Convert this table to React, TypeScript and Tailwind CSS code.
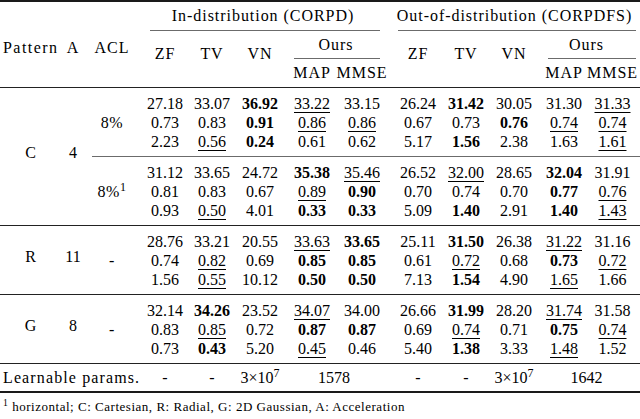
const fullCols =
  "grid grid-cols-[64px_18px_60px_46px_48px_48px_56px_44px_10px_48px_48px_48px_52px_45px_5px]";
const subCols =
  "grid grid-cols-[60px_46px_48px_48px_56px_44px_10px_48px_48px_48px_52px_45px_5px]";

type Block = { acl: React.ReactNode; rows: string[][] };

// "*x" bold, "_x" underlined
function Num({ v }: { v: string }) {
  const bold = v.startsWith("*");
  const under = v.startsWith("_");
  const text = v.replace(/^[*_]/, "");
  return (
    <div className="h-[19px] text-center whitespace-nowrap">
      <span
        className={
          bold
            ? "font-bold"
            : under
              ? "underline decoration-1 underline-offset-[3px]"
              : ""
        }
      >
        {text}
      </span>
    </div>
  );
}

function SubBlock({ block }: { block: Block }) {
  return (
    <div className={`${subCols} pt-[6px] pb-[5px]`}>
      <div className="row-span-3 col-start-1 flex items-center justify-center tracking-[0.04em]">
        {block.acl}
      </div>
      {block.rows.map((r, i) => (
        <>
          {r.slice(0, 5).map((v, j) => (
            <Num key={`a${i}${j}`} v={v} />
          ))}
          <div key={`s${i}`} />
          {r.slice(5).map((v, j) => (
            <Num key={`b${i}${j}`} v={v} />
          ))}
          <div key={`t${i}`} />
        </>
      ))}
    </div>
  );
}

function Group({ pattern, accel, blocks }: { pattern: string; accel: string; blocks: Block[] }) {
  return (
    <div className="flex">
      <div className="w-[64px] flex items-center justify-center pb-[8px] pr-[3px]">{pattern}</div>
      <div className="w-[18px] flex items-center justify-center pb-[8px]">{accel}</div>
      <div className="flex-1 flex flex-col">
        {blocks.map((b, i) => (
          <div key={i}>
            {i > 0 && <div className="ml-[10px] h-px bg-[#6b6b6b]" />}
            <SubBlock block={b} />
          </div>
        ))}
      </div>
    </div>
  );
}

function Header() {
  return (
    <div className={`${fullCols} grid-rows-[27px_3px_25px_3px_25px] pb-[2px] tracking-[0.06em]`}>
      <div className="col-start-1 row-start-1 row-span-5 flex items-center justify-start pt-[7px] pl-[3px] tracking-[0.09em] whitespace-nowrap">
        Pattern
      </div>
      <div className="col-start-2 row-start-1 row-span-5 flex items-center justify-center pt-[7px]">
        A
      </div>
      <div className="col-start-3 row-start-1 row-span-5 flex items-center justify-center pt-[7px]">
        ACL
      </div>

      <div className="col-start-4 col-span-5 row-start-1 flex items-center justify-center whitespace-nowrap">
        In-distribution (CORPD)
      </div>
      <div className="col-start-4 col-span-5 row-start-2 flex items-center">
        <div className="ml-[8px] mr-[4px] h-px w-full bg-[#6b6b6b]" />
      </div>
      <div className="col-start-10 col-span-5 row-start-1 flex items-center justify-center whitespace-nowrap">
        Out-of-distribution (CORPDFS)
      </div>
      <div className="col-start-10 col-span-6 row-start-2 flex items-center">
        <div className="ml-[4px] mr-[4px] h-px w-full bg-[#6b6b6b]" />
      </div>

      {["ZF", "TV", "VN"].map((t, i) => (
        <div
          key={`l${t}`}
          className={`${i === 0 ? "col-start-4" : i === 1 ? "col-start-5" : "col-start-6"} row-start-3 row-span-3 flex items-center justify-center pb-[11px]`}
        >
          {t}
        </div>
      ))}
      {["ZF", "TV", "VN"].map((t, i) => (
        <div
          key={`r${t}`}
          className={`${i === 0 ? "col-start-10" : i === 1 ? "col-start-11" : "col-start-12"} row-start-3 row-span-3 flex items-center justify-center pb-[11px]`}
        >
          {t}
        </div>
      ))}

      <div className="col-start-7 col-span-2 row-start-3 flex items-center justify-center pl-[4px]">
        Ours
      </div>
      <div className="col-start-7 col-span-2 row-start-4 flex items-center">
        <div className="ml-[10px] mr-[4px] h-px w-full bg-[#6b6b6b]" />
      </div>
      <div className="col-start-13 col-span-2 row-start-3 flex items-center justify-center">
        Ours
      </div>
      <div className="col-start-13 col-span-3 row-start-4 flex items-center">
        <div className="ml-[10px] mr-[4px] h-px w-full bg-[#6b6b6b]" />
      </div>

      <div className="col-start-7 row-start-5 flex items-center justify-center">MAP</div>
      <div className="col-start-8 row-start-5 flex items-center justify-center">MMSE</div>
      <div className="col-start-13 row-start-5 flex items-center justify-center">MAP</div>
      <div className="col-start-14 row-start-5 flex items-center justify-center">MMSE</div>
    </div>
  );
}

const groups: { pattern: string; accel: string; blocks: Block[] }[] = [
  {
    pattern: "C",
    accel: "4",
    blocks: [
      {
        acl: "8%",
        rows: [
          ["27.18", "33.07", "*36.92", "_33.22", "33.15", "26.24", "*31.42", "30.05", "31.30", "_31.33"],
          ["0.73", "0.83", "*0.91", "_0.86", "_0.86", "0.67", "0.73", "*0.76", "_0.74", "_0.74"],
          ["2.23", "_0.56", "*0.24", "0.61", "0.62", "5.17", "*1.56", "2.38", "1.63", "_1.61"],
        ],
      },
      {
        acl: (
          <span>
            8%<sup>1</sup>
          </span>
        ),
        rows: [
          ["31.12", "33.65", "24.72", "*35.38", "_35.46", "26.52", "_32.00", "28.65", "*32.04", "31.91"],
          ["0.81", "0.83", "0.67", "_0.89", "*0.90", "0.70", "0.74", "0.70", "*0.77", "_0.76"],
          ["0.93", "_0.50", "4.01", "*0.33", "*0.33", "5.09", "*1.40", "2.91", "*1.40", "_1.43"],
        ],
      },
    ],
  },
  {
    pattern: "R",
    accel: "11",
    blocks: [
      {
        acl: "-",
        rows: [
          ["28.76", "33.21", "20.55", "_33.63", "*33.65", "25.11", "*31.50", "26.38", "_31.22", "31.16"],
          ["0.74", "_0.82", "0.69", "*0.85", "*0.85", "0.61", "_0.72", "0.68", "*0.73", "_0.72"],
          ["1.56", "_0.55", "10.12", "*0.50", "*0.50", "7.13", "*1.54", "4.90", "_1.65", "1.66"],
        ],
      },
    ],
  },
  {
    pattern: "G",
    accel: "8",
    blocks: [
      {
        acl: "-",
        rows: [
          ["32.14", "*34.26", "23.52", "_34.07", "34.00", "26.66", "*31.99", "28.20", "_31.74", "31.58"],
          ["0.83", "_0.85", "0.72", "*0.87", "*0.87", "0.69", "_0.74", "0.71", "*0.75", "_0.74"],
          ["0.73", "*0.43", "5.20", "_0.45", "0.46", "5.40", "*1.38", "3.33", "_1.48", "1.52"],
        ],
      },
    ],
  },
];

export default function App() {
  return (
    <div className="w-[640px] h-[419px] overflow-hidden bg-white text-black font-['Liberation_Serif',serif] text-[16px] leading-[19px]">
      <div className="h-[2px] bg-[#1a1a1a]" />
      <Header />
      <div className="h-px bg-[#222]" />
      {groups.map((g, i) => (
        <div key={g.pattern}>
          {i > 0 && <div className="h-px bg-[#222]" />}
          <Group pattern={g.pattern} accel={g.accel} blocks={g.blocks} />
        </div>
      ))}
      <div className="h-px bg-[#222]" />
      <div className={`${fullCols} h-[27px] items-center`}>
        <div className="col-span-3 pl-[3px] tracking-[0.07em] whitespace-nowrap">Learnable params.</div>
        <div className="text-center">-</div>
        <div className="text-center">-</div>
        <div className="text-center whitespace-nowrap">
          3×10<sup>7</sup>
        </div>
        <div className="col-span-2 text-center">1578</div>
        <div />
        <div className="text-center">-</div>
        <div className="text-center">-</div>
        <div className="text-center whitespace-nowrap">
          3×10<sup>7</sup>
        </div>
        <div className="col-span-2 text-center">1642</div>
      </div>
      <div className="h-[2px] bg-[#1a1a1a]" />
      <div className="pl-[3px] pt-[6px] text-[13px] leading-[16px] tracking-[0.04em] whitespace-nowrap">
        <sup>1</sup> horizontal; C: Cartesian, R: Radial, G: 2D Gaussian, A: Acceleration
      </div>
    </div>
  );
}
